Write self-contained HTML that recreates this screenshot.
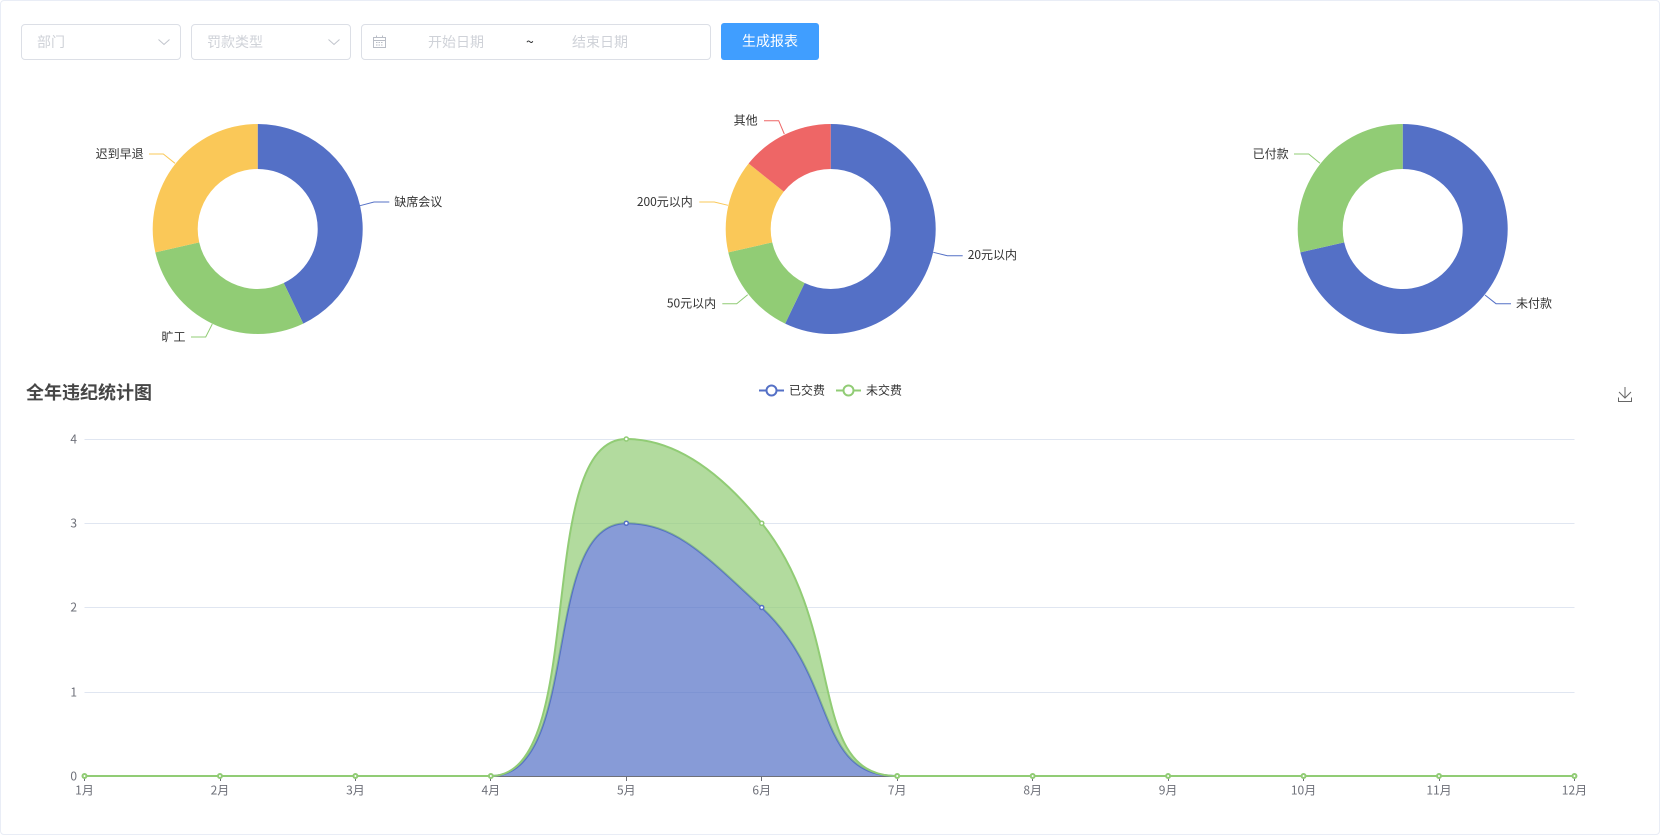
<!DOCTYPE html>
<html lang="zh-CN">
<head>
<meta charset="utf-8">
<title>全年违纪统计图</title>
<style>
html,body{margin:0;padding:0;background:#fff;width:1660px;height:835px;overflow:hidden;}
body{font-family:"Noto Sans CJK SC","Liberation Sans",sans-serif;}
.card{position:absolute;left:0;top:0;width:1658px;height:833px;border:1px solid #e9edf6;border-radius:4px;background:#fff;}
.box{position:absolute;top:24px;height:34px;border:1px solid #dcdfe6;border-radius:4px;background:#fff;}
.ph{position:absolute;top:24px;height:36px;line-height:36px;font-size:14px;color:#cfd2d8;white-space:nowrap;}
.btn{position:absolute;left:721px;top:23px;width:98px;height:37px;line-height:37px;text-align:center;background:#409eff;color:#fff;font-size:14px;border-radius:3px;}
svg.ic{position:absolute;overflow:visible;}
svg.chart{position:absolute;left:0;top:0;}
svg.chart text{font-family:"Noto Sans CJK SC","Liberation Sans",sans-serif;}
.l{font-size:12px;fill:#333;dominant-baseline:central;}
.a{font-size:12px;fill:#6e7079;dominant-baseline:central;}
</style>
</head>
<body>
<div class="card"></div>

<div class="box" style="left:21px;width:158px;"></div>
<div class="ph" style="left:37px;">部门</div>
<svg class="ic" style="left:157px;top:38px;" width="14" height="8" viewBox="0 0 14 8"><path d="M1.5 1.5 L7 6.5 L12.5 1.5" fill="none" stroke="#c0c4cc" stroke-width="1"/></svg>

<div class="box" style="left:191px;width:158px;"></div>
<div class="ph" style="left:207px;">罚款类型</div>
<svg class="ic" style="left:327px;top:38px;" width="14" height="8" viewBox="0 0 14 8"><path d="M1.5 1.5 L7 6.5 L12.5 1.5" fill="none" stroke="#c0c4cc" stroke-width="1"/></svg>

<div class="box" style="left:361px;width:348px;"></div>
<svg class="ic" style="left:373px;top:35px;" width="13" height="13" viewBox="0 0 13 13">
<path d="M.5 2.5H12.5V12.5H.5Z M.5 5.5H12.5" fill="none" stroke="#b9bdc6" stroke-width="1"/>
<path d="M3.5 .5V3 M9.5 .5V3" fill="none" stroke="#b9bdc6" stroke-width="1"/>
<path d="M3 7.5H10 M3 10H10" fill="none" stroke="#b9bdc6" stroke-width="1" stroke-dasharray="1.5 1"/>
</svg>
<div class="ph" style="left:428px;">开始日期</div>
<div class="ph" style="left:526px;color:#303133;font-size:14px;">~</div>
<div class="ph" style="left:572px;">结束日期</div>

<div class="btn">生成报表</div>

<svg class="chart" width="1660" height="835" viewBox="0 0 1660 835">
  <!-- Pie 1 -->
  <g transform="translate(257.7 229)">
    <path fill="#5470c6" d="M0 -105A105 105 0 0 1 45.56 94.6L26.03 54.06A60 60 0 0 0 0 -60Z"/>
    <path fill="#91cc75" d="M45.56 94.6A105 105 0 0 1 -102.37 23.36L-58.5 13.35A60 60 0 0 0 26.03 54.06Z"/>
    <path fill="#fac858" d="M-102.37 23.36A105 105 0 0 1 0 -105L0 -60A60 60 0 0 0 -58.5 13.35Z"/>
  </g>
  <g fill="none" stroke-width="1">
    <path stroke="#5470c6" d="M360 205.7L374 202H389.3"/>
    <path stroke="#91cc75" d="M212.3 324L205.7 337H191"/>
    <path stroke="#fac858" d="M175 163.3L163.3 154H149"/>
  </g>
  <text class="l" x="394.3" y="201.5">缺席会议</text>
  <text class="l" x="185.5" y="336.5" text-anchor="end">旷工</text>
  <text class="l" x="143.7" y="153.5" text-anchor="end">迟到早退</text>

  <!-- Pie 2 -->
  <g transform="translate(830.7 229)">
    <path fill="#5470c6" d="M0 -105A105 105 0 1 1 -45.56 94.6L-26.03 54.06A60 60 0 1 0 0 -60Z"/>
    <path fill="#91cc75" d="M-45.56 94.6A105 105 0 0 1 -102.37 23.36L-58.5 13.35A60 60 0 0 0 -26.03 54.06Z"/>
    <path fill="#fac858" d="M-102.37 23.36A105 105 0 0 1 -82.09 -65.47L-46.91 -37.41A60 60 0 0 0 -58.5 13.35Z"/>
    <path fill="#ee6666" d="M-82.09 -65.47A105 105 0 0 1 0 -105L0 -60A60 60 0 0 0 -46.91 -37.41Z"/>
  </g>
  <g fill="none" stroke-width="1">
    <path stroke="#5470c6" d="M933.3 252.3L947.3 255.7H962.7"/>
    <path stroke="#91cc75" d="M747.7 294.7L736.7 303.7H722.3"/>
    <path stroke="#fac858" d="M728 205.3L714.3 202H699.3"/>
    <path stroke="#ee6666" d="M784.3 134L778.7 120.7H764"/>
  </g>
  <text class="l" x="967.7" y="254.7">20元以内</text>
  <text class="l" x="716.2" y="303.2" text-anchor="end">50元以内</text>
  <text class="l" x="692.8" y="201.5" text-anchor="end">200元以内</text>
  <text class="l" x="757.7" y="120.2" text-anchor="end">其他</text>

  <!-- Pie 3 -->
  <g transform="translate(1402.7 229)">
    <path fill="#5470c6" d="M0 -105A105 105 0 1 1 -102.37 23.36L-58.5 13.35A60 60 0 1 0 0 -60Z"/>
    <path fill="#91cc75" d="M-102.37 23.36A105 105 0 0 1 0 -105L0 -60A60 60 0 0 0 -58.5 13.35Z"/>
  </g>
  <g fill="none" stroke-width="1">
    <path stroke="#5470c6" d="M1485 295L1496 303.7H1511"/>
    <path stroke="#91cc75" d="M1320 163.3L1308.7 154H1294"/>
  </g>
  <text class="l" x="1516" y="303.2">未付款</text>
  <text class="l" x="1288.7" y="153.5" text-anchor="end">已付款</text>

  <!-- Title -->
  <text x="26" y="392" font-size="18" font-weight="700" fill="#464646" dominant-baseline="central">全年违纪统计图</text>

  <!-- Legend -->
  <path d="M759 390.5H784" stroke="#5470c6" stroke-width="2" fill="none"/>
  <circle cx="771.5" cy="390.5" r="5" fill="#fff" stroke="#5470c6" stroke-width="2"/>
  <text class="l" x="789" y="390">已交费</text>
  <path d="M836 390.5H861" stroke="#91cc75" stroke-width="2" fill="none"/>
  <circle cx="848.5" cy="390.5" r="5" fill="#fff" stroke="#91cc75" stroke-width="2"/>
  <text class="l" x="866" y="390">未交费</text>

  <!-- Toolbox download -->
  <path d="M1625 387V398 M1619 392L1625 398L1631 392 M1618.5 397.5V401.5H1631.5V397.5" fill="none" stroke="#666" stroke-width="1"/>

  <!-- Grid -->
  <g stroke="#e0e6f1" stroke-width="1" fill="none">
    <path d="M84.5 439.5H1574.5 M84.5 523.5H1574.5 M84.5 607.5H1574.5 M84.5 692.5H1574.5"/>
  </g>
  <g text-anchor="end">
    <text class="a" x="77" y="439">4</text>
    <text class="a" x="77" y="523">3</text>
    <text class="a" x="77" y="607">2</text>
    <text class="a" x="77" y="692">1</text>
    <text class="a" x="77" y="776">0</text>
  </g>

  <!-- X axis -->
  <path d="M84.5 776.5H1574.5" stroke="#6e7079" stroke-width="1" fill="none"/>
  <path d="M84.5 776V781 M220.5 776V781 M355.5 776V781 M490.5 776V781 M626.5 776V781 M761.5 776V781 M897.5 776V781 M1032.5 776V781 M1168.5 776V781 M1303.5 776V781 M1439.5 776V781 M1574.5 776V781" stroke="#6e7079" stroke-width="1" fill="none"/>
  <g text-anchor="middle">
    <text class="a" x="84.5" y="790">1月</text>
    <text class="a" x="219.95" y="790">2月</text>
    <text class="a" x="355.4" y="790">3月</text>
    <text class="a" x="490.85" y="790">4月</text>
    <text class="a" x="626.3" y="790">5月</text>
    <text class="a" x="761.75" y="790">6月</text>
    <text class="a" x="897.2" y="790">7月</text>
    <text class="a" x="1032.65" y="790">8月</text>
    <text class="a" x="1168.1" y="790">9月</text>
    <text class="a" x="1303.55" y="790">10月</text>
    <text class="a" x="1439" y="790">11月</text>
    <text class="a" x="1574.45" y="790">12月</text>
  </g>

  <!-- Series: blue -->
  <path fill="#5470c6" fill-opacity=".7" d="M490.85 776C582.85 776 539.27 523.25 626.3 523.25C674.71 523.25 704.24 553.85 761.75 607.5C839.69 680.22 813.92 776 897.2 776Z"/>
  <path fill="none" stroke="#5470c6" stroke-width="2" d="M84.5 776H490.85C582.85 776 539.27 523.25 626.3 523.25C674.71 523.25 704.24 553.85 761.75 607.5C839.69 680.22 813.92 776 897.2 776H1574.45"/>
  <!-- Series: green -->
  <path fill="#91cc75" fill-opacity=".7" d="M490.85 776C589.51 776 532.17 439 626.3 439C667.64 439 713.33 463.01 761.75 523.25C848.79 631.53 805.21 776 897.2 776C813.92 776 839.69 680.22 761.75 607.5C704.24 553.85 674.71 523.25 626.3 523.25C539.27 523.25 582.85 776 490.85 776Z"/>
  <path fill="none" stroke="#91cc75" stroke-width="2" d="M84.5 776H490.85C589.51 776 532.17 439 626.3 439C667.64 439 713.33 463.01 761.75 523.25C848.79 631.53 805.21 776 897.2 776H1574.45"/>

  <!-- Symbols -->
  <g fill="#fff" stroke="#5470c6" stroke-width="1.5">
    <circle cx="626.3" cy="523.25" r="2"/>
    <circle cx="761.75" cy="607.5" r="2"/>
  </g>
  <g fill="#fff" stroke="#91cc75" stroke-width="1.5">
    <circle cx="626.3" cy="439" r="2"/>
    <circle cx="761.75" cy="523.25" r="2"/>
  </g>
  <g fill="#fff" stroke="#91cc75" stroke-width="2">
    <circle cx="84.5" cy="776" r="2"/>
    <circle cx="219.95" cy="776" r="2"/>
    <circle cx="355.4" cy="776" r="2"/>
    <circle cx="490.85" cy="776" r="2"/>
    <circle cx="897.2" cy="776" r="2"/>
    <circle cx="1032.65" cy="776" r="2"/>
    <circle cx="1168.1" cy="776" r="2"/>
    <circle cx="1303.55" cy="776" r="2"/>
    <circle cx="1439" cy="776" r="2"/>
    <circle cx="1574.45" cy="776" r="2"/>
  </g>
</svg>
</body>
</html>
